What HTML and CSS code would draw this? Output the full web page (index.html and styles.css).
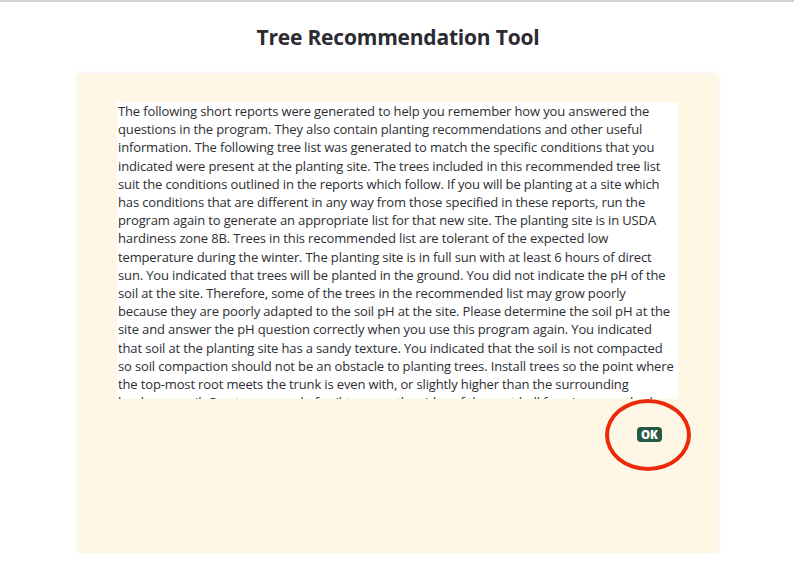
FILE: index.html
```html
<!DOCTYPE html>
<html>
<head>
<meta charset="utf-8">
<link rel="stylesheet" href="styles.css">
</head>
<body>
<div class="page">
  <h1 class="title">Tree Recommendation Tool</h1>
  <div class="panel">
    <div class="report">
      <p>The following short reports were generated to help you remember how you answered the questions in the program. They also contain planting recommendations and other useful information. The following tree list was generated to match the specific conditions that you indicated were present at the planting site. The trees included in this recommended tree list suit the conditions outlined in the reports which follow. If you will be planting at a site which has conditions that are different in any way from those specified in these reports, run the program again to generate an appropriate list for that new site. The planting site is in USDA hardiness zone 8B. Trees in this recommended list are tolerant of the expected low temperature during the winter. The planting site is in full sun with at least 6 hours of direct sun. You indicated that trees will be planted in the ground. You did not indicate the pH of the soil at the site. Therefore, some of the trees in the recommended list may grow poorly because they are poorly adapted to the soil pH at the site. Please determine the soil pH at the site and answer the pH question correctly when you use this program again. You indicated that soil at the planting site has a sandy texture. You indicated that the soil is not compacted so soil compaction should not be an obstacle to planting trees. Install trees so the point where the top-most root meets the trunk is even with, or slightly higher than the surrounding landscape soil. Create a mound of soil to cover the sides of the root ball forming a gentle slope away from the trunk.</p>
    </div>
    <div class="actions">
      <button class="ok">OK</button>
      <span class="highlight"></span>
    </div>
  </div>
</div>
</body>
</html>
```
FILE: styles.css
```css
html, body {
  margin: 0;
  padding: 0;
  background: #ffffff;
}
body {
  border-top: 2px solid #d2d2d2;
  font-family: "Open Sans", "Liberation Sans", sans-serif;
  color: #2f2f33;
}
.page {
  display: flex;
  flex-direction: column;
  align-items: center;
  padding-left: 2px;
}
.title {
  margin: 21px 0 23px;
  font-size: 21px;
  line-height: 28px;
  font-weight: 700;
  color: #2b2b31;
  letter-spacing: -0.2px;
}
.panel {
  width: 640px;
  height: 479px;
  box-sizing: border-box;
  background: #fef7e5;
  box-shadow: 0 0 5px rgba(200, 190, 160, 0.25);
  padding: 28px 40px 0 39px;
  display: flex;
  flex-direction: column;
}
.report {
  background: #ffffff;
  height: 297px;
  overflow: hidden;
}
.report p {
  margin: 0;
  padding-left: 1px;
  font-size: 13px;
  line-height: 18.2px;
  letter-spacing: -0.14px;
  color: #2e2e33;
}
.actions {
  display: flex;
  justify-content: flex-end;
  padding: 28px 16px 0 0;
  position: relative;
}
.ok {
  font-family: "Open Sans", "Liberation Sans", sans-serif;
  font-weight: 800;
  font-size: 11.5px;
  line-height: 15px;
  height: 15px;
  padding: 0 4px;
  border: none;
  border-radius: 4px;
  background: #245a45;
  color: #ffffff;
}
.highlight {
  position: absolute;
  right: -13px;
  top: 0;
  width: 78px;
  height: 64px;
  border: 4px solid #ec2a0e;
  border-radius: 50%;
}
```
